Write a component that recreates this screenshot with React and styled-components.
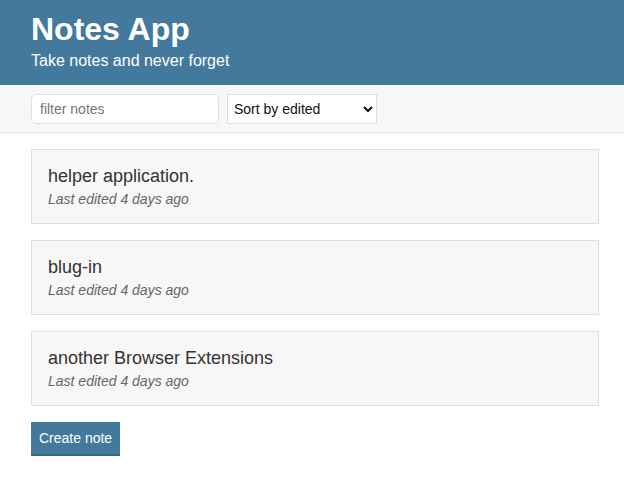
import React from "react";
import styled, { createGlobalStyle } from "styled-components";

const Global = createGlobalStyle`
  * { box-sizing: border-box; }
  html, body { margin: 0; padding: 0; background: #fff; }
  body { font-family: "Liberation Sans", Arial, sans-serif; color: #333; }
`;

const Container = styled.div`
  width: 568px;
  margin: 0 25px 0 31px;
`;

const Header = styled.header`
  background: #43799c;
  color: #fff;
  padding: 9px 0 14px;
`;

const Title = styled.h1`
  margin: 0;
  font-size: 32px;
  line-height: 40px;
  font-weight: 700;
`;

const Subtitle = styled.p`
  margin: 2px 0 0;
  font-size: 16px;
  line-height: 20px;
  font-weight: 400;
`;

const Actions = styled.div`
  background: #f7f7f7;
  border-bottom: 1px solid #dedede;
  padding: 9px 0 8px;
`;

const ActionsRow = styled.div`
  display: flex;
  align-items: center;
  gap: 8px;
`;

const Input = styled.input`
  width: 188px;
  height: 30px;
  border: 1px solid #dedede;
  border-radius: 5px;
  padding: 4px 8px;
  font-family: inherit;
  font-size: 14px;
  color: #333;
  background: #fff;
  outline: none;
  &::placeholder { color: #777; }
`;

const Select = styled.select`
  width: 150px;
  height: 30px;
  border: 1px solid #dedede;
  border-radius: 0;
  background: #fff;
  font-family: inherit;
  font-size: 14px;
  color: #111;
  padding: 0 2px;
`;

const List = styled.div`
  display: flex;
  flex-direction: column;
  gap: 16px;
  padding-top: 16px;
`;

const Item = styled.a`
  display: block;
  background: #f7f7f7;
  border: 1px solid #dedede;
  padding: 16px;
  text-decoration: none;
  color: #333;
`;

const ItemTitle = styled.p`
  margin: 0 0 4px;
  font-size: 18px;
  line-height: 21px;
`;

const ItemMeta = styled.p`
  margin: 0;
  font-size: 14px;
  line-height: 16px;
  font-style: italic;
  color: #666;
`;

const Button = styled.button`
  margin-top: 16px;
  background: #43799c;
  color: #fff;
  border: none;
  border-bottom: 2px solid #38657f;
  font-family: inherit;
  font-size: 14px;
  line-height: 16px;
  padding: 8px;
  cursor: pointer;
`;

const notes = ["helper application.", "blug-in", "another Browser Extensions"];

export default function App() {
  return (
    <>
      <Global />
      <Header>
        <Container>
          <Title>Notes App</Title>
          <Subtitle>Take notes and never forget</Subtitle>
        </Container>
      </Header>
      <Actions>
        <Container>
          <ActionsRow>
            <Input placeholder="filter notes" />
            <Select defaultValue="edited">
              <option value="edited">Sort by edited</option>
              <option value="created">Sort by created</option>
              <option value="alpha">Sort alphabetically</option>
            </Select>
          </ActionsRow>
        </Container>
      </Actions>
      <Container>
        <List>
          {notes.map((n) => (
            <Item key={n}>
              <ItemTitle>{n}</ItemTitle>
              <ItemMeta>Last edited 4 days ago</ItemMeta>
            </Item>
          ))}
        </List>
        <Button>Create note</Button>
      </Container>
    </>
  );
}
